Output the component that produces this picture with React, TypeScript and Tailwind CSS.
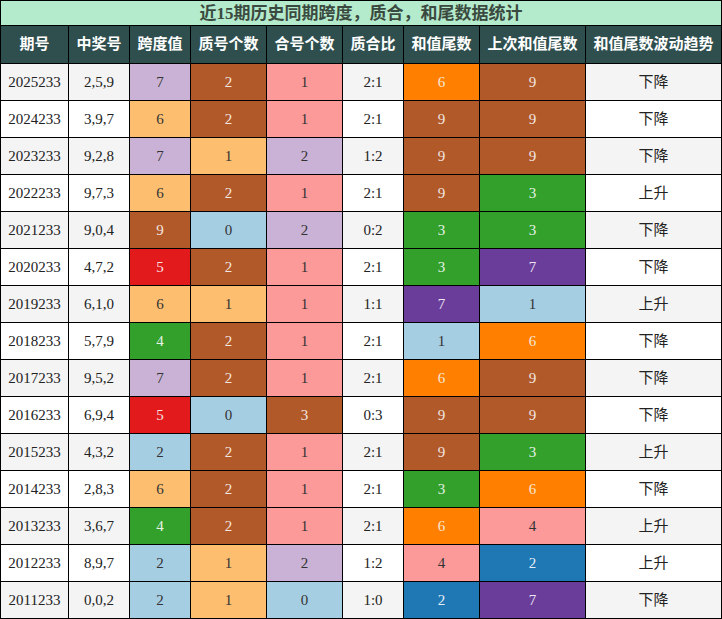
import React from "react";

type C = "lav" | "lo" | "br" | "pk" | "lb" | "or" | "gr" | "rd" | "pu" | "bl";

const bg: Record<C, string> = {
  lav: "bg-[#cab2d6] text-[#333333]",
  lo: "bg-[#fdbf6f] text-[#333333]",
  br: "bg-[#b15928] text-[#f2e6e0]",
  pk: "bg-[#fb9a99] text-[#333333]",
  lb: "bg-[#a6cee3] text-[#333333]",
  or: "bg-[#ff7f00] text-[#f7e8d8]",
  gr: "bg-[#33a02c] text-[#e6f2e4]",
  rd: "bg-[#e31a1c] text-[#f7e4e4]",
  pu: "bg-[#6a3d9a] text-[#ece6f2]",
  bl: "bg-[#1f78b4] text-[#e4eef6]",
};

type Row = [string, string, string, C, string, C, string, C, string, string, C, string, C, string];

const rows: Row[] = [
  ["2025233", "2,5,9", "7", "lav", "2", "br", "1", "pk", "2:1", "6", "or", "9", "br", "下降"],
  ["2024233", "3,9,7", "6", "lo", "2", "br", "1", "pk", "2:1", "9", "br", "9", "br", "下降"],
  ["2023233", "9,2,8", "7", "lav", "1", "lo", "2", "lav", "1:2", "9", "br", "9", "br", "下降"],
  ["2022233", "9,7,3", "6", "lo", "2", "br", "1", "pk", "2:1", "9", "br", "3", "gr", "上升"],
  ["2021233", "9,0,4", "9", "br", "0", "lb", "2", "lav", "0:2", "3", "gr", "3", "gr", "下降"],
  ["2020233", "4,7,2", "5", "rd", "2", "br", "1", "pk", "2:1", "3", "gr", "7", "pu", "下降"],
  ["2019233", "6,1,0", "6", "lo", "1", "lo", "1", "pk", "1:1", "7", "pu", "1", "lb", "上升"],
  ["2018233", "5,7,9", "4", "gr", "2", "br", "1", "pk", "2:1", "1", "lb", "6", "or", "下降"],
  ["2017233", "9,5,2", "7", "lav", "2", "br", "1", "pk", "2:1", "6", "or", "9", "br", "下降"],
  ["2016233", "6,9,4", "5", "rd", "0", "lb", "3", "br", "0:3", "9", "br", "9", "br", "下降"],
  ["2015233", "4,3,2", "2", "lb", "2", "br", "1", "pk", "2:1", "9", "br", "3", "gr", "上升"],
  ["2014233", "2,8,3", "6", "lo", "2", "br", "1", "pk", "2:1", "3", "gr", "6", "or", "下降"],
  ["2013233", "3,6,7", "4", "gr", "2", "br", "1", "pk", "2:1", "6", "or", "4", "pk", "上升"],
  ["2012233", "8,9,7", "2", "lb", "1", "lo", "2", "lav", "1:2", "4", "pk", "2", "bl", "上升"],
  ["2011233", "0,0,2", "2", "lb", "1", "lo", "0", "lb", "1:0", "2", "bl", "7", "pu", "下降"],
];

const headers = ["期号", "中奖号", "跨度值", "质号个数", "合号个数", "质合比", "和值尾数", "上次和值尾数", "和值尾数波动趋势"];

const font = { fontFamily: '"Liberation Serif", "Noto Sans CJK SC", serif' };

export default function App() {
  return (
    <div
      className="w-[722px] h-[619px] bg-black p-px grid gap-px grid-cols-[67px_60px_60px_75px_75px_60px_75px_105px_135px] grid-rows-[24px_37px_repeat(15,36px)]"
      style={font}
    >
      <div className="col-span-9 bg-[#b3ebcc] flex items-center justify-center text-[17px] font-bold text-[#3b4a40] leading-none">
        近15期历史同期跨度，质合，和尾数据统计
      </div>
      {headers.map((h) => (
        <div key={h} className="bg-[#2f4f4f] text-white font-bold text-[15px] flex items-center justify-center whitespace-nowrap">
          {h}
        </div>
      ))}
      {rows.map((r, i) => {
        const base = i % 2 === 0 ? "bg-[#f4f4f4]" : "bg-white";
        const plain = `${base} text-[#222222] flex items-center justify-center text-[15px]`;
        const colored = (c: C) => `${bg[c]} flex items-center justify-center text-[15px]`;
        return (
          <React.Fragment key={r[0]}>
            <div className={plain}>{r[0]}</div>
            <div className={plain}>{r[1]}</div>
            <div className={colored(r[3])}>{r[2]}</div>
            <div className={colored(r[5])}>{r[4]}</div>
            <div className={colored(r[7])}>{r[6]}</div>
            <div className={plain}>{r[8]}</div>
            <div className={colored(r[10])}>{r[9]}</div>
            <div className={colored(r[12])}>{r[11]}</div>
            <div className={plain}>{r[13]}</div>
          </React.Fragment>
        );
      })}
    </div>
  );
}
